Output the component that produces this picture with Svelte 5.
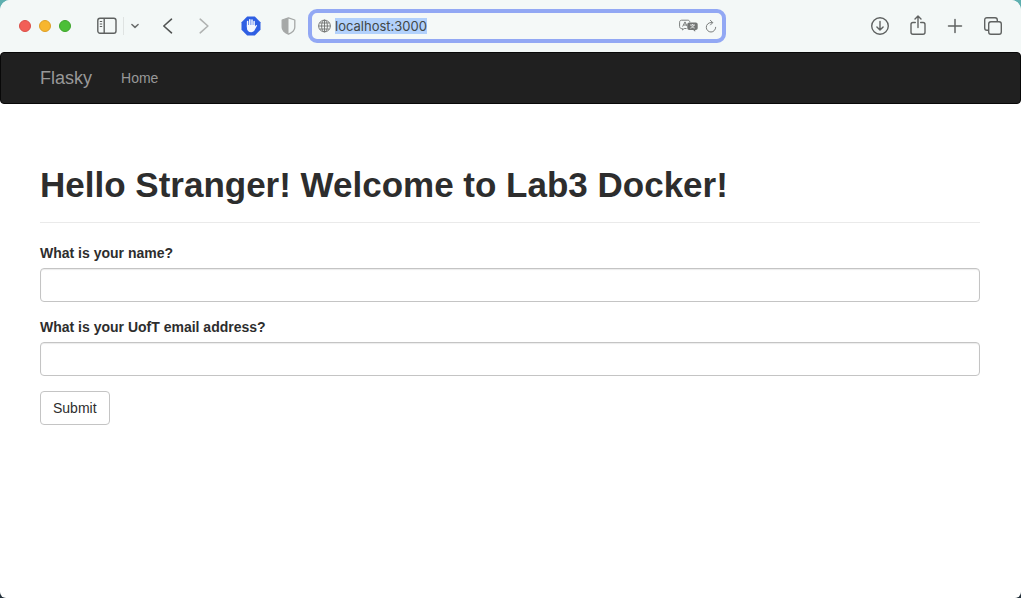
<script>
  import { onMount } from 'svelte';

  let address = $state('localhost:3000');
  let name = $state('');
  let email = $state('');
  let addressField;

  onMount(() => {
    addressField.focus();
    addressField.select();
  });
</script>

<div class="window">
  <header class="toolbar">
    <div class="group left">
      <div class="lights">
        <button class="light close" aria-label="Close"></button>
        <button class="light minimise" aria-label="Minimise"></button>
        <button class="light zoom" aria-label="Zoom"></button>
      </div>
      <div class="sidebar">
        <button class="tool" aria-label="Sidebar">
          <svg width="20" height="18" viewBox="0 0 20 18" fill="none" stroke="#5e6160" stroke-width="1.4">
            <rect x="0.8" y="1.2" width="18.2" height="15" rx="2.2" />
            <path d="M7.2 1.2v15" />
            <path d="M2.8 4.5h2.4M2.8 7h2.4M2.8 9.5h2.4" stroke-width="1" />
          </svg>
        </button>
        <span class="divider"></span>
        <button class="tool" aria-label="Tab groups">
          <svg width="10" height="18" viewBox="0 0 10 18" fill="none" stroke="#6a6d6c" stroke-width="1.5" stroke-linecap="round" stroke-linejoin="round">
            <path d="M1.9 7.5 5 10.4l3.1-2.9" />
          </svg>
        </button>
      </div>
      <div class="history">
        <button class="tool" aria-label="Back">
          <svg width="12" height="18" viewBox="0 0 12 18" fill="none" stroke="#525554" stroke-width="1.6" stroke-linecap="round" stroke-linejoin="round">
            <path d="M9.5 2.2 1.8 9l7.7 6.8" />
          </svg>
        </button>
        <button class="tool" aria-label="Forward">
          <svg width="12" height="18" viewBox="0 0 12 18" fill="none" stroke="#b0b3b2" stroke-width="1.6" stroke-linecap="round" stroke-linejoin="round">
            <path d="M2.2 2.2 9.9 9l-7.7 6.8" />
          </svg>
        </button>
      </div>
      <div class="extensions">
        <button class="tool" aria-label="Ad blocker">
          <svg width="20" height="20" viewBox="0 0 20 20">
            <path d="M6.2.5h7.6l5.7 5.7v7.6l-5.7 5.7H6.2L.5 13.8V6.2z" fill="#2f5fe3" />
            <path d="M6.6 11V5.4M8.8 10V3.7M11 10V3.9M13.1 11V5.6" stroke="#f4f7ff" stroke-width="1.5" stroke-linecap="round" />
            <path d="M5.9 9h8v1.4l1-1.2c.6-.6 1.4-.1 1 .7l-2.2 4.2c-.7 1.3-1.9 2.2-3.5 2.2-2.7 0-4.3-1.7-4.3-4.3z" fill="#f4f7ff" />
          </svg>
        </button>
        <button class="tool" aria-label="Privacy report">
          <svg width="15" height="18" viewBox="0 0 15 18">
            <path d="M7.5.9 13.8 3v7.2c0 3-2.5 5.3-6.3 7-3.8-1.7-6.3-4-6.3-7V3z" fill="none" stroke="#a5a8a7" stroke-width="1.3" stroke-linejoin="round" />
            <path d="M7.5.9v16.3c-3.8-1.7-6.3-4-6.3-7V3z" fill="#a5a8a7" />
          </svg>
        </button>
      </div>
    </div>

    <div class="address">
      <svg width="13" height="14" viewBox="0 0 13 14" fill="none" stroke="#6f7271" stroke-width="0.9">
        <circle cx="6.5" cy="7" r="5.9" />
        <ellipse cx="6.5" cy="7" rx="2.9" ry="5.9" />
        <path d="M6.5 1.1v11.8M.6 7h11.8M1.7 4h9.6M1.7 10h9.6" />
      </svg>
      <input class="address-field" type="text" aria-label="Address" spellcheck="false" bind:value={address} bind:this={addressField} />
      <button class="tool" aria-label="Translate">
        <svg width="20" height="14" viewBox="0 0 20 14">
          <path d="M7.5 9.5H5.2L3.4 11V9.5h-.8c-1.2 0-2-.8-2-2V3.2c0-1.2.8-2 2-2h6.2c1.2 0 2 .8 2 2" fill="none" stroke="#7b7e7d" />
          <path d="M3.6 7.6 6 2.9l2.1 4.4M4.5 6h3" fill="none" stroke="#7b7e7d" />
          <path d="M10.3 3.6h6.4c1.2 0 2 .8 2 2v3.3c0 1.2-.8 2-2 2h-.5v1.9l-2-1.9h-3.9c-1.2 0-2-.8-2-2V5.6c0-1.2.8-2 2-2z" fill="#727574" />
          <path d="M11 6h5M13.5 5v1M15 6c-.5 1.500-2 2.700-3.700 3.200M12.200 6.500c.5 1.200 1.800 2.200 3.500 2.600" fill="none" stroke="#f2f5f4" stroke-width="0.8" />
        </svg>
      </button>
      <button class="tool" aria-label="Reload">
        <svg width="12" height="14" viewBox="0 0 12 14" fill="none" stroke="#7b7e7d" stroke-linecap="round" stroke-linejoin="round">
          <path d="M10.7 8.300a4.700 4.700 0 1 1-4.700-4.700h1.300M5.400 1.400l2.400 2.200-2.300 2.300" />
        </svg>
      </button>
    </div>

    <div class="group right">
      <button class="tool" aria-label="Downloads">
        <svg width="20" height="20" viewBox="0 0 20 20" fill="none" stroke="#606362" stroke-width="1.4" stroke-linecap="round" stroke-linejoin="round">
          <circle cx="10" cy="10" r="8.3" />
          <path d="M10 5.5v8.3M6.9 10.9l3.100 3.100 3.100-3.100" />
        </svg>
      </button>
      <button class="tool" aria-label="Share">
        <svg width="18" height="22" viewBox="0 0 18 22" fill="none" stroke="#606362" stroke-width="1.4" stroke-linecap="round" stroke-linejoin="round">
          <path d="M6.300 7.500H4a2 2 0 0 0-2 2v7.800a2 2 0 0 0 2 2h10a2 2 0 0 0 2-2V9.500a2 2 0 0 0-2-2h-2.300M9 12.500V1.200M6 4l3-3 3 3" />
        </svg>
      </button>
      <button class="tool" aria-label="New tab">
        <svg width="18" height="18" viewBox="0 0 18 18" fill="none" stroke="#606362" stroke-width="1.5" stroke-linecap="round">
          <path d="M9 2.500v13M2.500 9h13" />
        </svg>
      </button>
      <button class="tool" aria-label="Tab overview">
        <svg width="20" height="20" viewBox="0 0 20 20" fill="none" stroke="#606362" stroke-width="1.4" stroke-linejoin="round">
          <rect x="5.700" y="5.700" width="12.600" height="12.600" rx="2.200" />
          <path d="M5.700 14.200H3.900a2.200 2.200 0 0 1-2.200-2.200V3.900a2.200 2.200 0 0 1 2.200-2.200h8.200a2.200 2.200 0 0 1 2.200 2.200v1.800" />
        </svg>
      </button>
    </div>
  </header>

  <nav class="navbar">
    <a class="brand" href="/">Flasky</a>
    <a class="nav-link" href="/">Home</a>
  </nav>

  <main>
    <div class="page-header">
      <h1>Hello Stranger! Welcome to Lab3 Docker!</h1>
    </div>
    <form onsubmit={(event) => event.preventDefault()}>
      <div class="form-group">
        <label for="name">What is your name?</label>
        <input id="name" class="form-control" type="text" bind:value={name} />
      </div>
      <div class="form-group">
        <label for="email">What is your UofT email address?</label>
        <input id="email" class="form-control" type="text" bind:value={email} />
      </div>
      <button class="submit" type="submit">Submit</button>
    </form>
  </main>
</div>

<style>
  :global(body) {
    margin: 0;
    background: linear-gradient(#5eb0b0, #23303a);
  }

  * {
    box-sizing: border-box;
  }

  .window {
    min-height: 100vh;
    overflow: hidden;
    border-radius: 10px 10px 6px 6px;
    background: #fff;
    color: #2d2d2d;
    font: 14px/20px "Liberation Sans", Arial, sans-serif;
  }

  .toolbar {
    display: grid;
    grid-template-columns: 308fr 418fr 295fr;
    align-items: center;
    height: 52px;
    background: #f3f8f7;
  }

  .group,
  .lights,
  .sidebar,
  .history,
  .extensions {
    display: flex;
    align-items: center;
  }

  .left {
    padding-left: 19px;
  }

  .lights {
    gap: 8px;
    margin-right: 26px;
  }

  .light {
    width: 12px;
    height: 12px;
    padding: 0;
    border: 1px solid;
    border-radius: 50%;
  }

  .close {
    background: #f25f57;
    border-color: #da4f48;
  }

  .minimise {
    background: #f7b62f;
    border-color: #dd9f25;
  }

  .zoom {
    background: #4cbf38;
    border-color: #3ea52c;
  }

  .sidebar {
    gap: 6px;
    margin-right: 22px;
  }

  .divider {
    width: 1px;
    height: 18px;
    background: #dfe3e2;
  }

  .history {
    gap: 24px;
    margin-right: 31px;
  }

  .extensions {
    gap: 20px;
  }

  .tool {
    display: flex;
    padding: 0;
    border: 0;
    background: none;
  }

  .tool svg,
  .address svg {
    display: block;
    flex: none;
  }

  .address {
    display: flex;
    align-items: center;
    height: 34px;
    padding: 0 5px 0 6px;
    border: 4px solid #92a8f4;
    border-radius: 9px;
    background: #f5f9f8;
  }

  .address-field {
    flex: 1;
    min-width: 0;
    height: 16px;
    margin: 0 8px 0 4px;
    padding: 0;
    border: 0;
    outline: 0;
    background: none;
    color: #414746;
    font: 13px/16px Inter, sans-serif;
  }

  .address-field::selection {
    background: #b2d1fc;
    color: #414746;
  }

  .address .tool:last-child {
    margin-left: 6px;
  }

  .right {
    justify-content: flex-end;
    gap: 19px;
    padding-right: 18px;
  }

  .navbar {
    display: flex;
    align-items: center;
    gap: 29px;
    height: 52px;
    padding: 0 39px;
    border: 1px solid #080808;
    border-radius: 4px;
    background: #202020;
  }

  .navbar a {
    color: #989898;
    text-decoration: none;
  }

  .navbar .brand {
    font-size: 18px;
  }

  main {
    padding: 61px 41px 40px 40px;
  }

  .page-header {
    margin-bottom: 20px;
    padding-bottom: 17px;
    border-bottom: 1px solid #eaeaea;
  }

  h1 {
    margin: 0;
    font-size: 35px;
    line-height: 40px;
    font-weight: 700;
  }

  .form-group {
    margin-bottom: 15px;
  }

  label {
    display: block;
    margin-bottom: 5px;
    font-weight: 700;
  }

  .form-control {
    display: block;
    width: 100%;
    height: 34px;
    padding: 6px 12px;
    border: 1px solid #c4c4c4;
    border-radius: 4px;
    background: #fff;
    box-shadow: inset 0 1px 1px rgba(0, 0, 0, 0.08);
    font: inherit;
  }

  .submit {
    height: 34px;
    padding: 6px 12px;
    border: 1px solid #c4c4c4;
    border-radius: 4px;
    background: #fff;
    color: inherit;
    font: inherit;
  }
</style>
